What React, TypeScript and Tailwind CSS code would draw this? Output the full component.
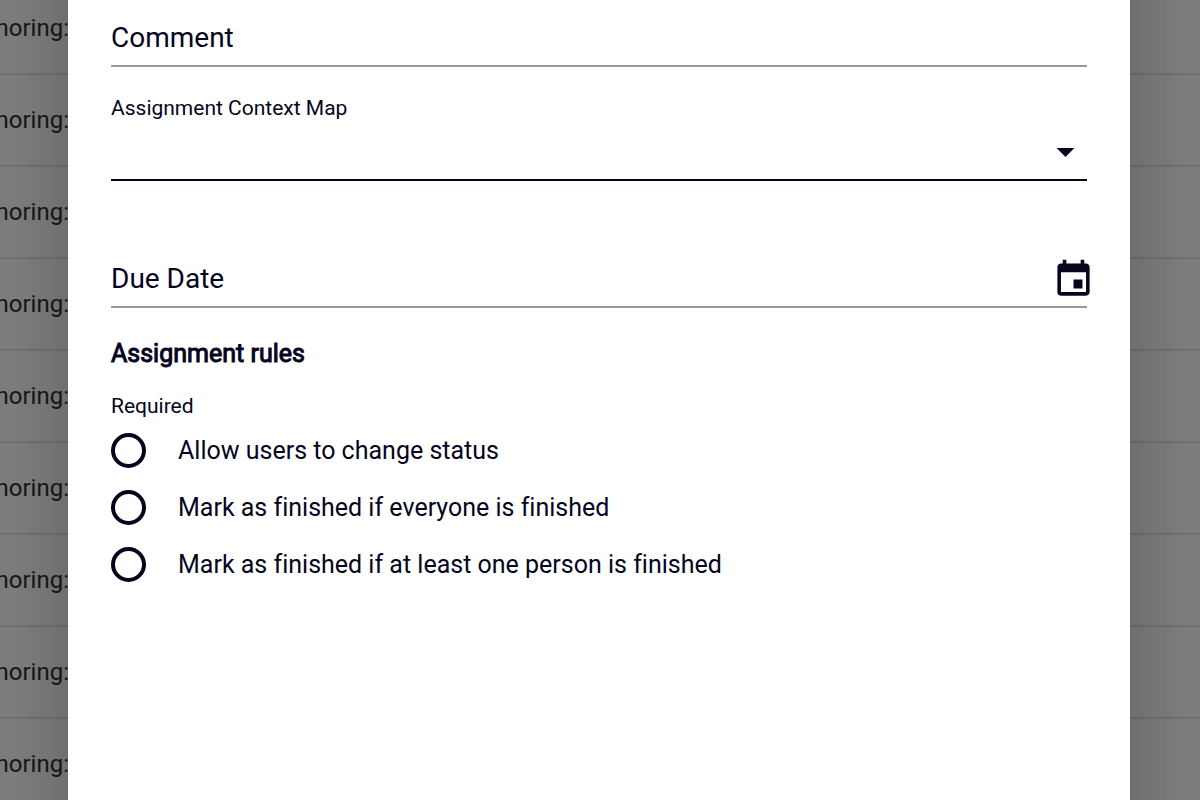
import { MdArrowDropDown, MdEvent } from 'react-icons/md'

const ROWS = [1, 2, 3, 4, 5, 6, 7, 8, 9]

const RULES = [
  { value: 'status', label: 'Allow users to change status' },
  { value: 'everyone', label: 'Mark as finished if everyone is finished' },
  { value: 'one', label: 'Mark as finished if at least one person is finished' },
]

function BackgroundList() {
  return (
    <ul className="-mt-[17px]">
      {ROWS.map((row) => (
        <li key={row} className="flex h-[92px] border-b-2 border-[#e2e2e2]">
          <span className="flex w-[69px] items-center justify-end overflow-hidden text-2xl text-[#333333]">
            noring:
          </span>
        </li>
      ))}
    </ul>
  )
}

function AssignmentForm() {
  return (
    <form className="flex flex-col">
      <input
        type="text"
        aria-label="Comment"
        placeholder="Comment"
        className="h-[67px] border-b-2 border-[#999999] pt-2.5 text-[28px] outline-none placeholder:text-[#05051e]"
      />

      <label htmlFor="context-map" className="mt-[25px] text-[21px] leading-8">
        Assignment Context Map
      </label>
      <div className="flex h-[57px] items-center border-b-2 border-[#05051e]">
        <select id="context-map" className="h-full flex-1 appearance-none text-[28px] outline-none">
          <option value=""></option>
        </select>
        <MdArrowDropDown className="pointer-events-none size-[43px]" />
      </div>

      <div className="mt-[70px] flex h-[57px] items-center border-b-2 border-[#999999]">
        <input
          type="text"
          aria-label="Due Date"
          placeholder="Due Date"
          className="h-full min-w-0 flex-1 text-[28px] outline-none placeholder:text-[#05051e]"
        />
        <button type="button" aria-label="Open calendar" className="-mr-2 pt-0.5">
          <MdEvent className="size-[43px]" />
        </button>
      </div>

      <h2 className="mt-[30px] text-[25px] leading-8 font-normal [-webkit-text-stroke:1px]">Assignment rules</h2>

      <fieldset className="mt-5">
        <legend className="text-[21px] leading-8">Required</legend>
        {RULES.map((rule) => (
          <label
            key={rule.value}
            className="flex h-[57px] items-center gap-8 text-[25px] [font-variant-ligatures:none]"
          >
            <input
              type="radio"
              name="rule"
              value={rule.value}
              className="size-[35px] appearance-none rounded-full border-4 border-[#05051e]"
            />
            {rule.label}
          </label>
        ))}
      </fieldset>
    </form>
  )
}

export default function App() {
  return (
    <div className="relative flow-root h-screen overflow-hidden bg-[#fcfcfc] font-[Roboto,sans-serif]">
      <BackgroundList />

      {/* Backdrop + dialog */}
      <div className="absolute inset-0 flex bg-black/50 pr-[70px] pl-[68px]">
        <div
          role="dialog"
          aria-label="Assignment"
          className="-my-32 flex-1 bg-white px-[43px] py-32 text-[#05051e] shadow-[0_16px_67px_5px_rgba(0,0,0,0.14),0_16px_81px_8px_rgba(0,0,0,0.08)]"
        >
          <AssignmentForm />
        </div>
      </div>
    </div>
  )
}
